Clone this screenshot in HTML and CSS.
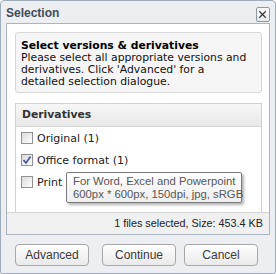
FILE: index.html
```html
<!DOCTYPE html>
<html lang="en">
<head>
    <meta charset="UTF-8">
    <title>Selection</title>
    <link rel="stylesheet" href="styles.css">
</head>
<body>
    <div class="dialog">
        <div class="titlebar">
            <span class="title">Selection</span>
            <span class="close">
                <svg width="14" height="15" viewBox="0 0 14 15">
                    <line x1="3.5" y1="4" x2="10.5" y2="11" stroke="#3a3a3a" stroke-width="1.4"/>
                    <line x1="10.5" y1="4" x2="3.5" y2="11" stroke="#3a3a3a" stroke-width="1.4"/>
                </svg>
            </span>
        </div>

        <div class="body">
            <div class="content">
                <div class="intro">
                    <b>Select versions &amp; derivatives</b><br>
                    Please select all appropriate versions and<br>
                    derivatives. Click 'Advanced' for a<br>
                    detailed selection dialogue.
                </div>

                <div class="panel">
                    <div class="panel-head">Derivatives</div>
                    <ul class="options">
                        <li><span class="check"></span>Original (1)</li>
                        <li>
                            <span class="check">
                                <svg width="10" height="10" viewBox="0 0 10 10">
                                    <polyline points="1.5,5 4,8 8.5,1.5" fill="none" stroke="#3d4f9f" stroke-width="1.6"/>
                                </svg>
                            </span>Office format (1)
                        </li>
                        <li><span class="check"></span>Print</li>
                    </ul>
                </div>
            </div>
            <div class="status">1 files selected, Size: 453.4 KB</div>
        </div>

        <div class="buttons">
            <button type="button" class="btn btn-advanced">Advanced</button>
            <button type="button" class="btn">Continue</button>
            <button type="button" class="btn">Cancel</button>
        </div>

        <!-- hover tooltip for the Print row -->
        <div class="tooltip">For Word, Excel and Powerpoint<br>600px * 600px, 150dpi, jpg, sRGB</div>
    </div>
</body>
</html>
```

FILE: styles.css
```css
/* Page */
body {
    margin: 0;
    background: #ffffff;
    font-family: "DejaVu Sans", Verdana, sans-serif;
}

/* Dialog frame */
.dialog {
    position: relative;
    width: 276px;
    height: 274px;
    box-sizing: border-box;
    border: 1px solid #9eabb8;
    border-radius: 4px 4px 2px 2px;
    background: #eceef1;
    padding: 0 5px;
}

/* Title bar */
.titlebar {
    height: 22px;
    display: flex;
    align-items: center;
    justify-content: space-between;
}

.title {
    font-family: "Liberation Sans", Arial, sans-serif;
    font-weight: bold;
    font-size: 12px;
    color: #3f4c5a;
    margin-top: 1px;
}

.close {
    width: 14px;
    height: 15px;
    box-sizing: border-box;
    border: 1px solid #8e99a6;
    border-radius: 2px;
    background: linear-gradient(#ffffff, #e7e9ec);
    display: flex;
    margin-top: 5px;
}

.close svg {
    margin: -1px 0 0 -1px;
}

/* White body of the dialog */
.body {
    border: 1px solid #a9b4c0;
    background: #ffffff;
}

.content {
    height: 188px;
    box-sizing: border-box;
    padding: 8px 7px 0 8px;
    display: flex;
    flex-direction: column;
}

/* Intro box */
.intro {
    border: 1px solid #d7d7d7;
    border-radius: 3px;
    background: #f5f5f5;
    padding: 7px 4px 4px 5px;
    font-size: 10.8px;
    line-height: 12px;
    color: #111;
    white-space: nowrap;
}

.intro b {
    color: #000;
}

/* Derivatives panel */
.panel {
    flex: 1;
    margin-top: 10px;
    border: 1px solid #d2d2d2;
    border-bottom: none;
}

.panel-head {
    height: 22px;
    line-height: 22px;
    padding-left: 6px;
    border-bottom: 1px solid #d6d6d6;
    background: linear-gradient(#f7f7f7, #e8e8e8);
    font-size: 10.8px;
    font-weight: bold;
    color: #333;
}

.options {
    list-style: none;
    margin: 0;
    padding: 0 0 0 5px;
}

.options li {
    height: 22px;
    display: flex;
    align-items: center;
    font-size: 11px;
    color: #222;
}

.check {
    width: 12px;
    height: 12px;
    box-sizing: border-box;
    border: 1px solid #929292;
    background: linear-gradient(135deg, #d9d9d9, #ffffff);
    margin-right: 4px;
    display: flex;
    align-items: center;
    justify-content: center;
}

/* Status line */
.status {
    height: 21px;
    line-height: 21px;
    border-top: 1px solid #d4d4d4;
    background: #f0f0f0;
    text-align: right;
    padding-right: 6px;
    font-family: "Liberation Sans", Arial, sans-serif;
    font-size: 10.8px;
    color: #222;
}

/* Buttons */
.buttons {
    display: flex;
    gap: 8px;
    margin-top: 9px;
    padding: 0 12px 0 9px;
}

.btn {
    width: 74px;
    height: 22px;
    border: 1px solid #a7a7a7;
    border-radius: 4px;
    background: linear-gradient(#ffffff, #e9e9e9);
    font-family: "Liberation Sans", Arial, sans-serif;
    font-size: 12px;
    color: #3a3a3a;
    padding: 0;
}

.btn-advanced {
    margin-right: auto;
}

/* Tooltip */
.tooltip {
    position: absolute;
    left: 65px;
    top: 171px;
    width: 176px;
    height: 31px;
    box-sizing: border-box;
    border: 1px solid #7a7a7a;
    border-radius: 2px;
    background: linear-gradient(#ffffff, #eeeeee);
    box-shadow: 2px 2px 3px rgba(0, 0, 0, 0.3);
    padding: 2px 6px;
    font-family: "Liberation Sans", Arial, sans-serif;
    font-size: 11.3px;
    line-height: 12.5px;
    color: #575757;
    white-space: nowrap;
}
```
